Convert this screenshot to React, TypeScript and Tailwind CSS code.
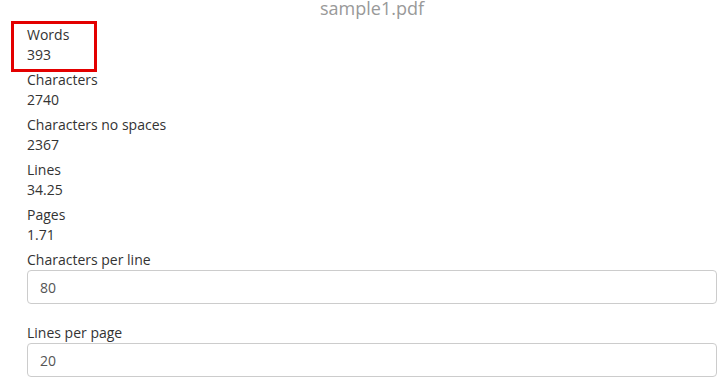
export default function App() {
  const stats = [
    { label: 'Characters', value: '2740' },
    { label: 'Characters no spaces', value: '2367' },
    { label: 'Lines', value: '34.25' },
    { label: 'Pages', value: '1.71' },
  ];

  return (
    <div className="min-h-screen bg-white font-['Open_Sans',sans-serif] text-[14px] leading-[20px] text-[#333] overflow-hidden">
      <div className="ml-[27px] mr-[11px]">
        {/* File name */}
        <h1 className="-mt-[2px] text-center text-[18px] leading-[20px] text-[#999] font-normal">sample1.pdf</h1>

        {/* Highlighted stat */}
        <div className="relative mt-[7px] mb-[5px]">
          <div className="absolute -left-[16px] -top-[4px] w-[86px] h-[51px] border-[3px] border-[#e30000]" />
          <div>Words</div>
          <div>393</div>
        </div>

        {stats.map((s) => (
          <div key={s.label} className="mb-[5px]">
            <div>{s.label}</div>
            <div>{s.value}</div>
          </div>
        ))}

        {/* Settings */}
        <div className="mb-[19px]">
          <label className="block">Characters per line</label>
          <input
            type="text"
            defaultValue="80"
            className="block w-full h-[34px] px-[12px] border border-[#ccc] rounded-[4px] text-[14px] text-[#555] outline-none"
          />
        </div>
        <div>
          <label className="block">Lines per page</label>
          <input
            type="text"
            defaultValue="20"
            className="block w-full h-[34px] px-[12px] border border-[#ccc] rounded-[4px] text-[14px] text-[#555] outline-none"
          />
        </div>
      </div>
    </div>
  );
}
